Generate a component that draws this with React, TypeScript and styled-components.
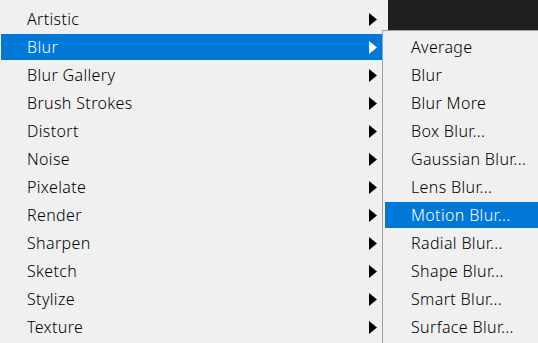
import React from "react";
import styled, { createGlobalStyle } from "styled-components";

const Global = createGlobalStyle`
  html, body { margin: 0; padding: 0; overflow: hidden; }
  body { width: 538px; height: 343px; background: #f0f0f0; }
  #root { height: 343px; }
`;

const Page = styled.div`
  position: relative;
  display: flex;
  width: 538px;
  height: 343px;
  overflow: hidden;
  font-family: "Noto Sans", "Open Sans", sans-serif;
  font-size: 16px;
  font-weight: 350;
  letter-spacing: 0.35px;
`;

const Menu = styled.div`
  display: flex;
  flex-direction: column;
  gap: 2px;
  width: 388px;
  flex: none;
  padding-top: 6px;
  background: #f0f0f0;
  box-sizing: border-box;
`;

const Canvas = styled.div`
  flex: 1;
  height: 30px;
  background: #1f1f1f;
`;

const SubMenu = styled.div`
  position: absolute;
  left: 382px;
  top: 30px;
  width: 180px;
  height: 330px;
  box-sizing: border-box;
  display: flex;
  flex-direction: column;
  gap: 2px;
  padding: 3px 2px;
  background: #f0f0f0;
  border-top: 1px solid #a0a0a0;
  border-left: 1px solid #a0a0a0;
`;

const Item = styled.div<{ $active?: boolean }>`
  display: flex;
  align-items: center;
  justify-content: space-between;
  height: 26px;
  flex: none;
  margin: 0 1px;
  padding: 0 10px 0 26px;
  background: ${(p) => (p.$active ? "#0078d7" : "transparent")};
  color: ${(p) => (p.$active ? "#ffffff" : "#000000")};
  white-space: nowrap;
  line-height: 26px;
`;

const SubItem = styled(Item)`
  margin: 0;
`;

const Arrow = styled.svg`
  width: 8px;
  height: 13px;
  flex: none;
`;

const Chevron = ({ active }: { active?: boolean }) => (
  <Arrow viewBox="0 0 8 13">
    <polygon points="0,0 8,6.5 0,13" fill={active ? "#ffffff" : "#000000"} />
  </Arrow>
);

const filters = [
  "Artistic",
  "Blur",
  "Blur Gallery",
  "Brush Strokes",
  "Distort",
  "Noise",
  "Pixelate",
  "Render",
  "Sharpen",
  "Sketch",
  "Stylize",
  "Texture",
];

const blurs = [
  "Average",
  "Blur",
  "Blur More",
  "Box Blur...",
  "Gaussian Blur...",
  "Lens Blur...",
  "Motion Blur...",
  "Radial Blur...",
  "Shape Blur...",
  "Smart Blur...",
  "Surface Blur...",
];

export default function App() {
  return (
    <>
      <Global />
      <Page>
        <Menu>
          {filters.map((f) => (
            <Item key={f} $active={f === "Blur"}>
              <span>{f}</span>
              <Chevron active={f === "Blur"} />
            </Item>
          ))}
        </Menu>
        <Canvas />
        <SubMenu>
          {blurs.map((b) => (
            <SubItem key={b} $active={b === "Motion Blur..."}>
              <span>{b}</span>
            </SubItem>
          ))}
        </SubMenu>
      </Page>
    </>
  );
}
